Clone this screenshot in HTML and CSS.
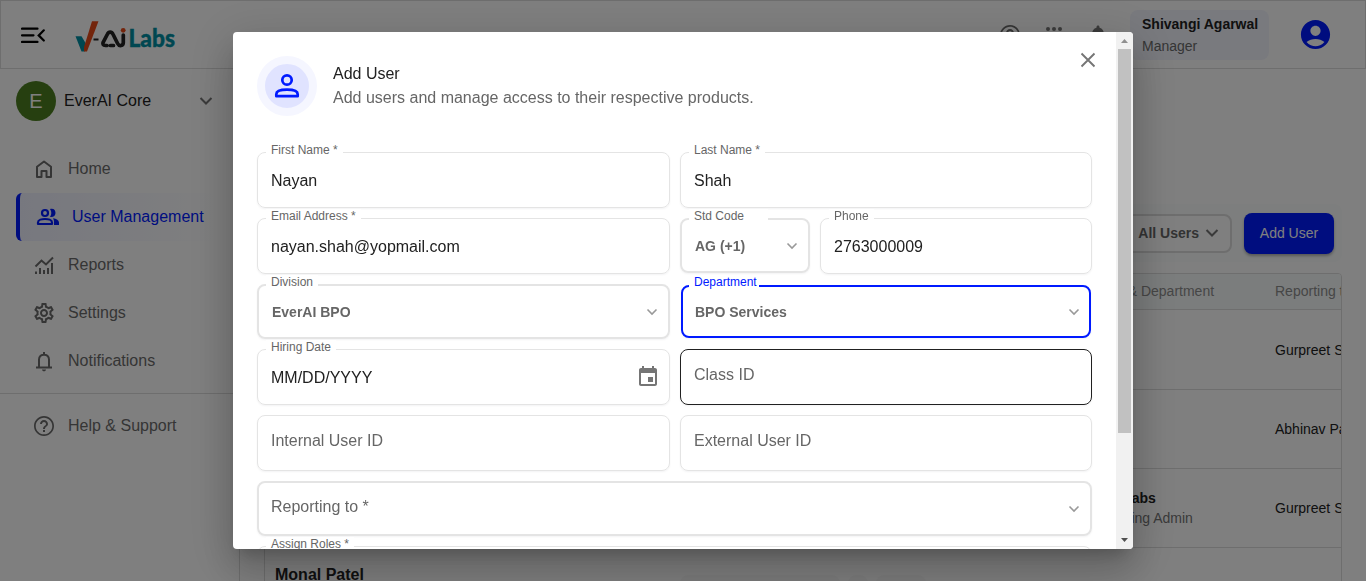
FILE: index.html
```html
<!DOCTYPE html>
<html lang="en">
<head>
<meta charset="utf-8">
<title>Add User</title>
<link rel="stylesheet" href="styles.css">
</head>
<body>
<div class="app">
  <header class="topbar">
    <svg class="menu-icon" width="24" height="24" viewBox="0 0 24 24"><path d="M1 5.700h15.500M1 12.300h11.500M1 18.900h15.500M22.800 7.300l-5.100 5.100 5.100 5.100" fill="none" stroke="#000" stroke-width="2.200" stroke-linecap="round"/></svg>
    <svg class="logo" width="102" height="34" viewBox="0 0 102 34">
      <path d="M.5 18.300h6l4 6.700v7.500l-1 1H6.500z" fill="#008fa3"/>
      <path d="M17 3.200h6.500L12 33.500H9V29z" fill="#e64a19"/>
      <path d="M18.500 21.500h5" stroke="#222" stroke-width="2"/>
      <path d="M32 27.500h-1.500c-2.500 0-3.300-1.700-2.200-3.500l4.200-8c1.200-2.600 4.200-2.600 5.400 0l4.700 9.500c1.700 3.300 5.700 2.300 5.700-1V17M35.500 27.500h3" fill="none" stroke="#222" stroke-width="3.700" stroke-linecap="round"/>
      <circle cx="48.200" cy="12.300" r="2.400" fill="#e64a19"/>
      <text class="logo-text" x="53.500" y="28.500" textLength="46.500" lengthAdjust="spacingAndGlyphs">Labs</text>
    </svg>
    <div class="top-actions">
      <svg class="act-help" width="24" height="24" viewBox="0 0 24 24"><use href="#i-help"/></svg>
      <svg class="act-apps" width="24" height="24" viewBox="0 0 24 24"><g fill="#757575"><circle cx="6" cy="6" r="2"/><circle cx="12" cy="6" r="2"/><circle cx="18" cy="6" r="2"/><circle cx="6" cy="12" r="2"/><circle cx="12" cy="12" r="2"/><circle cx="18" cy="12" r="2"/></g></svg>
      <svg class="act-bell" width="24" height="24" viewBox="0 0 24 24"><path fill="#757575" d="M12 22c1.100 0 2-.9 2-2h-4c0 1.100.9 2 2 2m6-6v-5c0-3.070-1.630-5.640-4.500-6.320V4c0-.83-.67-1.500-1.500-1.500s-1.500.67-1.500 1.500v.68C7.640 5.360 6 7.920 6 11v5l-2 2v1h16v-1z"/></svg>
      <div class="profile"><b>Shivangi Agarwal</b><span>Manager</span></div>
      <svg class="account" width="35" height="35" viewBox="0 0 24 24"><path fill="#001aff" d="M12 2C6.480 2 2 6.480 2 12s4.480 10 10 10 10-4.480 10-10S17.520 2 12 2m0 4c1.930 0 3.500 1.570 3.500 3.500S13.930 13 12 13s-3.500-1.570-3.500-3.500S10.070 6 12 6m0 14c-2.030 0-4.430-.82-6.140-2.880C7.550 15.800 9.680 15 12 15s4.450.8 6.140 2.120C16.430 19.180 14.030 20 12 20"/></svg>
    </div>
  </header>
  <div class="body">
    <nav class="sidebar">
      <div class="product">
        <span class="avatar">E</span><span class="product-name">EverAI Core</span>
        <svg width="14" height="10" viewBox="0 0 14 10"><path d="M1.500 2l5.500 5.500L12.500 2" fill="none" stroke="#757575" stroke-width="2"/></svg>
      </div>
      <a class="item"><svg width="24" height="24" viewBox="0 0 24 24"><path d="M5 20V9.800L12 4.500l7 5.300V20h-4.500v-6h-5v6z" fill="none" stroke="#6b6b6b" stroke-width="2" stroke-linejoin="round"/></svg>Home</a>
      <a class="item active"><svg width="24" height="24" viewBox="0 0 24 24"><g fill="none" stroke="#001aff" stroke-width="2.200"><circle cx="9" cy="8" r="3"/><path d="M2 19v-1.500c0-2.500 4-3.500 7-3.500s7 1 7 3.500V19z" stroke-linejoin="round"/></g><path fill="#001aff" d="M14 4c4-1 5.500 1.500 5.500 4S17.500 12.500 14 12c1.800-2.500 1.800-5.500 0-8M17 13.300c3.500.5 6 1.900 6 4.200V20h-5v-2.500c0-1.700-.2-3-1-4.200"/></g></svg>User Management</a>
      <a class="item"><svg width="24" height="24" viewBox="0 0 24 24"><path d="M3.500 13.500l6-6 4.500 4 7-7M4 21v-2.500M8 21v-6M12 21v-4M16 21v-6M20 21V10" fill="none" stroke="#6b6b6b" stroke-width="2"/></svg>Reports</a>
      <a class="item"><svg width="24" height="24" viewBox="0 0 24 24"><path fill="#6b6b6b" d="M19.430 12.980c.04-.32.07-.64.07-.98s-.03-.66-.07-.98l2.110-1.650c.19-.15.24-.42.12-.64l-2-3.460c-.09-.16-.26-.25-.44-.25-.06 0-.12.010-.17.030l-2.490 1c-.52-.4-1.080-.73-1.690-.98l-.38-2.650C14.460 2.180 14.250 2 14 2h-4c-.25 0-.46.18-.49.42l-.38 2.650c-.61.25-1.170.59-1.690.98l-2.490-1c-.06-.02-.12-.03-.18-.03-.17 0-.34.09-.43.25l-2 3.460c-.13.22-.07.49.12.64l2.110 1.650c-.04.32-.07.65-.07.98s.03.66.07.98l-2.110 1.650c-.19.15-.24.42-.12.64l2 3.460c.09.16.26.25.44.25.06 0 .12-.01.17-.03l2.490-1c.52.4 1.080.73 1.690.98l.38 2.650c.03.24.24.42.49.42h4c.25 0 .46-.18.49-.42l.38-2.650c.61-.25 1.170-.59 1.690-.98l2.490 1c.06.02.12.03.18.03.17 0 .34-.09.43-.25l2-3.460c.12-.22.07-.49-.12-.64zm-1.980-1.710c.04.31.05.52.05.73s-.02.43-.05.73l-.14 1.130.89.7 1.080.84-.7 1.210-1.270-.51-1.040-.42-.9.68c-.43.32-.84.56-1.250.73l-1.060.43-.16 1.130-.2 1.350h-1.400l-.19-1.350-.16-1.130-1.060-.43c-.43-.18-.83-.41-1.230-.71l-.91-.7-1.060.43-1.270.51-.7-1.210 1.080-.84.89-.7-.14-1.130c-.03-.31-.05-.54-.05-.74s.02-.43.05-.73l.14-1.130-.89-.7-1.080-.84.7-1.210 1.270.51 1.040.42.9-.68c.43-.32.84-.56 1.250-.73l1.060-.43.16-1.130.2-1.350h1.390l.19 1.350.16 1.130 1.060.43c.43.18.83.41 1.230.71l.91.7 1.060-.43 1.270-.51.7 1.210-1.070.85-.89.7zM12 8c-2.210 0-4 1.790-4 4s1.790 4 4 4 4-1.790 4-4-1.790-4-4-4m0 6c-1.100 0-2-.9-2-2s.9-2 2-2 2 .9 2 2-.9 2-2 2"/></svg>Settings</a>
      <a class="item"><svg width="24" height="24" viewBox="0 0 24 24"><path d="M4 18.500h16M7 18.500V10.500c0-6.500 10-6.500 10 0v8M12 5V3" fill="none" stroke="#6b6b6b" stroke-width="2"/><path d="M10 20.500h4c0 2.400-4 2.400-4 0" fill="#6b6b6b"/></svg>Notifications</a>
      <hr>
      <a class="item"><svg width="24" height="24" viewBox="0 0 24 24"><path id="i-help" fill="#6b6b6b" d="M11 18h2v-2h-2zm1-16C6.480 2 2 6.480 2 12s4.480 10 10 10 10-4.480 10-10S17.520 2 12 2m0 18.300c-4.600 0-8.300-3.700-8.300-8.300S7.400 3.700 12 3.700s8.300 3.700 8.300 8.300-3.700 8.300-8.300 8.300M12 6c-2.210 0-4 1.790-4 4h2c0-1.100.9-2 2-2s2 .9 2 2c0 2-3 1.750-3 5h2c0-2.250 3-2.500 3-5 0-2.210-1.790-4-4-4"/></svg>Help &amp; Support</a>
    </nav>
    <main class="main">
      <div class="toolbar">
        <div class="filter">All Users <svg width="14" height="10" viewBox="0 0 14 10"><path d="M1.500 2l5.500 5.500L12.500 2" fill="none" stroke="#757575" stroke-width="2"/></svg></div>
        <div class="add">Add User</div>
      </div>
      <div class="table">
        <div class="row head"><div></div><div class="dept">Role &amp; Department</div><div>Reporting to</div></div>
        <div class="row"><div></div><div></div><div>Gurpreet Singh</div></div>
        <div class="row"><div></div><div></div><div>Abhinav Patel</div></div>
        <div class="row"><div></div><div class="role"><b>V-Ai Labs</b><span>Training Admin</span></div><div>Gurpreet Singh</div></div>
        <div class="row last"><div class="name">Monal Patel</div><div></div><div></div></div>
      </div>
      <div class="pager"><i class="pill wide"></i><i class="pill dot"></i><i class="pill short"></i></div>
    </main>
  </div>
</div>
<div class="backdrop">
  <div class="dialog" role="dialog">
    <div class="content">
      <svg class="close" width="16" height="16" viewBox="0 0 16 16"><path d="M1.500 1.500l13 13m0-13l-13 13" stroke="#757575" stroke-width="1.900"/></svg>
      <div class="title">
        <div class="badge"><svg width="28" height="28" viewBox="0 0 28 28"><g fill="none" stroke="#001aff" stroke-width="2.700"><circle cx="14" cy="8" r="4.700"/><path d="M3.300 24.200v-2c0-3.400 5.400-4.600 10.700-4.600s10.700 1.200 10.700 4.600v2z" stroke-linejoin="round"/></g></svg></div>
        <div class="heading"><div>Add User</div><p>Add users and manage access to their respective products.</p></div>
      </div>
      <div class="form">
        <div class="field"><label>First Name *</label>Nayan</div>
        <div class="field"><label>Last Name *</label>Shah</div>
        <div class="field"><label>Email Address *</label>nayan.shah@yopmail.com</div>
        <div class="phone">
          <div class="field select"><label class="std">Std Code</label><b>AG (+1)</b><svg class="chev" width="12" height="8" viewBox="0 0 12 8"><path d="M1.500 1.500L6 6l4.500-4.500" fill="none" stroke="#999" stroke-width="1.600"/></svg></div>
          <div class="field"><label>Phone</label>2763000009</div>
        </div>
        <div class="field select"><label>Division</label><b>EverAI BPO</b><svg class="chev" width="12" height="8" viewBox="0 0 12 8"><path d="M1.500 1.500L6 6l4.500-4.500" fill="none" stroke="#999" stroke-width="1.600"/></svg></div>
        <div class="field select focus"><label>Department</label><b>BPO Services</b><svg class="chev" width="12" height="8" viewBox="0 0 12 8"><path d="M1.500 1.500L6 6l4.500-4.500" fill="none" stroke="#999" stroke-width="1.600"/></svg></div>
        <div class="field"><label>Hiring Date</label>MM/DD/YYYY<svg class="cal" width="24" height="24" viewBox="0 0 24 24"><path fill="#757575" d="M17 12h-5v5h5zM16 1v2H8V1H6v2H5c-1.110 0-1.990.9-1.990 2L3 19c0 1.100.89 2 2 2h14c1.100 0 2-.9 2-2V5c0-1.100-.9-2-2-2h-1V1zm3 18H5V8h14z"/></svg></div>
        <div class="field empty hover">Class ID</div>
        <div class="field empty">Internal User ID</div>
        <div class="field empty">External User ID</div>
        <div class="field select empty full">Reporting to *<svg class="chev low" width="12" height="8" viewBox="0 0 12 8"><path d="M1.500 1.500L6 6l4.500-4.500" fill="none" stroke="#999" stroke-width="1.600"/></svg></div>
        <div class="field full"><label>Assign Roles *</label></div>
      </div>
    </div>
    <div class="scrollbar">
      <svg width="17" height="17" viewBox="0 0 17 17"><path d="M5 11h7L8.500 7z" fill="#8f8f8f"/></svg>
      <div class="thumb"></div>
      <svg class="down" width="17" height="17" viewBox="0 0 17 17"><path d="M5 6h7l-3.500 4z" fill="#505050"/></svg>
    </div>
  </div>
</div>
</body>
</html>
```
FILE: styles.css
```css
* { box-sizing: border-box; }
body { margin: 0; height: 581px; overflow: hidden; background: #fff; font: 16px/24px "Liberation Sans", Arial, sans-serif; color: #212121; }
svg { display: block; flex: none; }
.app { height: 581px; overflow: hidden; }

.topbar { height: 69px; border: 1px solid #dcdcdc; display: flex; align-items: center; padding: 0 32px 0 20px; }
.menu-icon { margin-right: 30px; }
.logo-text { font: 900 24px Lato, sans-serif; fill: #008fa3; stroke: #008fa3; stroke-width: .4px; }
.top-actions { margin-left: auto; display: flex; align-items: center; }
.act-help { margin-right: 20px; }
.act-apps { margin-right: 20px; }
.act-bell { margin-right: 20px; }
.profile { width: 139px; height: 50px; margin-right: 29px; border-radius: 8px; background: #f3f5fd; padding: 3px 12px; font-size: 14px; line-height: 22px; display: flex; flex-direction: column; white-space: nowrap; }
.profile span { color: #6b6b6b; }

.body { display: flex; height: 512px; }
.sidebar { width: 240px; border-right: 1px solid #dcdcdc; flex: none; }
.product { display: flex; align-items: center; height: 64px; padding: 0 26px 0 16px; margin-bottom: 12px; }
.avatar { width: 40px; height: 40px; border-radius: 50%; background: #4d7f21; color: #fff; font-size: 20px; display: grid; place-items: center; }
.product-name { margin: 0 auto 0 8px; }
.item { display: flex; align-items: center; height: 48px; margin-left: 16px; padding-left: 16px; gap: 12px; color: #6b6b6b; }
.item.active { color: #001aff; border-left: 4px solid #001aff; border-radius: 6px; background: linear-gradient(90deg, #eff1ff, #fff 95%); }
.sidebar hr { border: 0; border-top: 1px solid #dcdcdc; margin: 8px 0; }

.main { flex: 1; min-width: 0; padding: 135px 24px 0; }
.toolbar { height: 58px; background: #fafdfc; border-radius: 8px; display: flex; align-items: center; justify-content: flex-end; gap: 12px; padding-right: 8px; }
.filter { display: flex; align-items: center; gap: 6px; width: 160px; justify-content: flex-end; height: 39px; padding-right: 11px; border: 2px solid #dcdcdc; border-radius: 8px; background: #fff; color: #666; font-size: 14px; font-weight: 700; }
.add { width: 90px; height: 41px; border-radius: 8px; background: #001aff; color: #fff; font-size: 14px; line-height: 41px; text-align: center; box-shadow: 0 2px 3px rgba(0,0,0,.3); }
.table { margin-top: 11px; width: 1078px; height: 420px; border: 1px solid #dcdcdc; border-radius: 4px; overflow: hidden; font-size: 14px; line-height: 20px; }
.row { display: grid; grid-template-columns: 827px 183px 1fr; align-items: center; height: 79px; border-bottom: 1px solid #dcdcdc; white-space: nowrap; }
.row:nth-child(2) { height: 80px; }
.row.head { height: 36px; background: #f7fbfa; color: #8d8d8d; padding-bottom: 2px; }
.dept { padding-left: 3px; }
.row.last { align-items: start; }
.name { padding: 17px 10px; font-size: 16px; font-weight: 700; }
.role { display: flex; flex-direction: column; }
.role span { color: #757575; padding-left: 8px; }
.pager { position: absolute; left: 680px; top: 575px; display: flex; gap: 8px; }
.pill { height: 32px; background: #f9f9f9; border-radius: 8px; }
.wide { width: 160px; }
.dot { width: 20px; }
.short { width: 50px; }

.backdrop { position: fixed; inset: 0; background: rgba(0,0,0,.5); padding: 32px 233px; }
.dialog { width: 900px; height: 517px; display: flex; background: #fff; border-radius: 4px; overflow: hidden; box-shadow: 0 11px 15px -7px rgba(0,0,0,.2), 0 24px 38px 3px rgba(0,0,0,.14), 0 9px 46px 8px rgba(0,0,0,.12); }
.content { position: relative; flex: 1; padding: 24px; overflow: hidden; }
.close { position: absolute; right: 20px; top: 20px; }
.title { display: flex; gap: 16px; height: 96px; }
.badge { width: 60px; height: 60px; border-radius: 50%; border: 8px solid #f5f6ff; background: #e0e3ff; display: grid; place-items: center; }
.heading { padding-top: 6px; }
.heading p { margin: 0; color: #666; }
.form { display: grid; grid-template-columns: 413px 412px; gap: 10px; align-items: start; }
.field { position: relative; height: 56px; border: 1px solid #e4e4e4; border-radius: 8px; padding: 2px 13px 0; display: flex; align-items: center; box-shadow: 0 1px 2px rgba(16,24,40,.05); }
.field label { position: absolute; left: 8px; top: -10px; padding: 0 5px; height: 14px; background: #fff; font-size: 12px; line-height: 14px; color: #666; white-space: nowrap; }
.select { height: 55.4px; border-width: 2px; padding: 1px 10px 0 12px; }
.field.select label { left: 7px; top: -11px; }
.field.select .std { width: 79px; }
.select b { font-size: 14px; color: #666; padding-left: 1px; }
.focus { border-color: #001aff; margin-left: 1px; margin-right: 1px; height: 53px; margin-top: 1px; padding-left: 11px; padding-right: 9px; }
.field.focus label { color: #001aff; left: 6px; top: -12px; padding-right: 2px; }
.hover { border-color: #212121; }
.empty { color: #666; padding-top: 0; padding-bottom: 5px; }
.phone { display: grid; grid-template-columns: 130px 1fr; gap: 10px; height: 56px; }
.full { grid-column: 1 / -1; }
.select.full { height: 55px; padding-bottom: 3px; }
.chev { margin-left: auto; }
.low { position: relative; top: 2px; }
.cal { position: relative; top: -1px; margin-left: auto; margin-right: -4px; }
.scrollbar { width: 17px; background: #f1f1f1; display: flex; flex-direction: column; }
.thumb { width: 13px; height: 384px; margin: 0 2px; background: #c1c1c1; }
.down { margin-top: auto; }
```
